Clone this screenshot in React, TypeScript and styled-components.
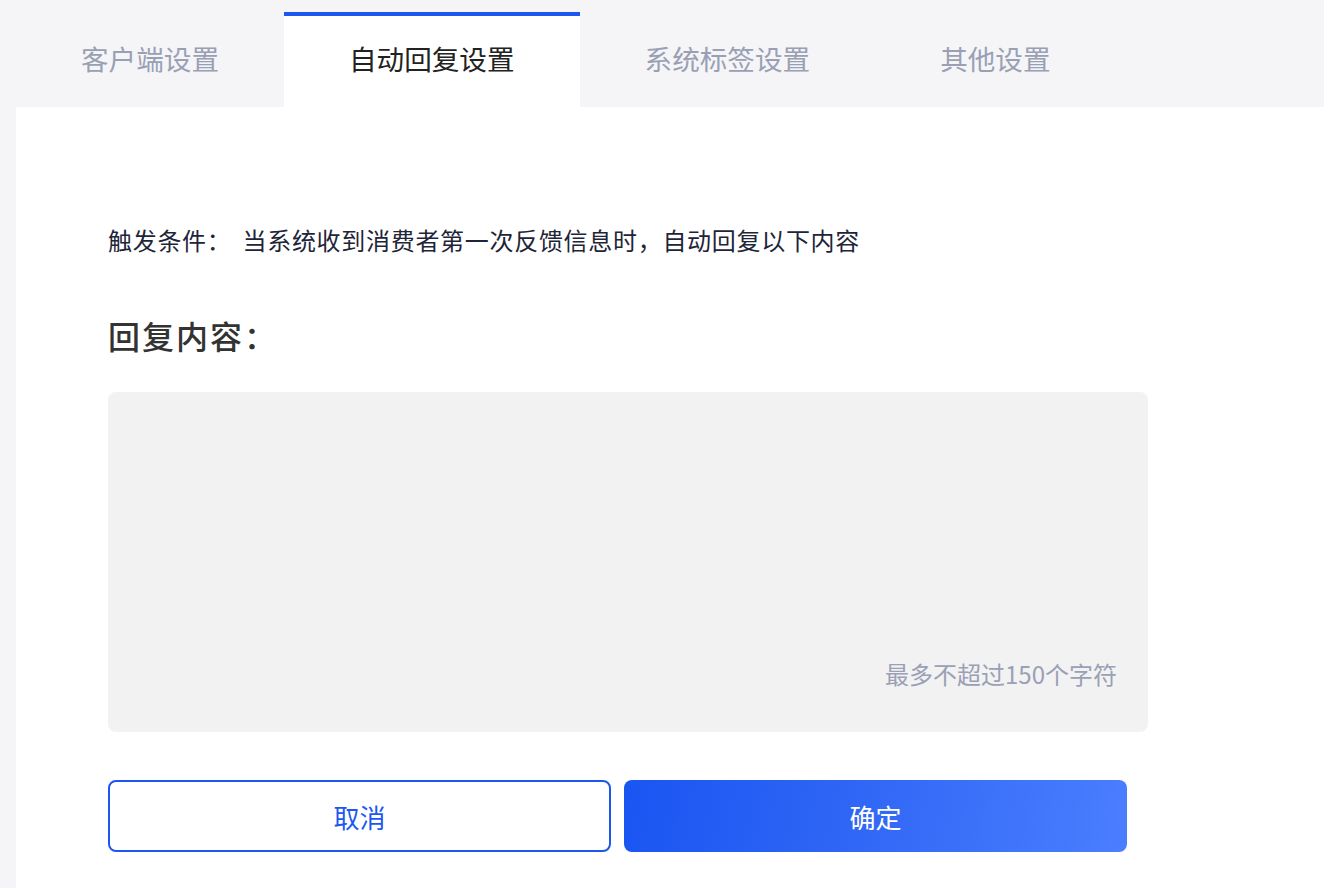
import React, { useState } from 'react';
import styled, { createGlobalStyle } from 'styled-components';

const GlobalStyle = createGlobalStyle`
    html, body {
        margin: 0;
        padding: 0;
        background: #f5f5f8;
        font-family: "Noto Sans CJK SC", "Noto Sans", sans-serif;
    }
    * {
        box-sizing: border-box;
    }
`;

const tabs = ['客户端设置', '自动回复设置', '系统标签设置', '其他设置'];

export default function App() {
    const [active, setActive] = useState<number>(1);
    const [text, setText] = useState<string>('');

    return (<Page>
        <GlobalStyle />
        <TabBar>
            { tabs.map((t, i) => <Tab key={t} active={(i === active).toString()} onClick={() => setActive(i)}>{ t }</Tab>) }
        </TabBar>
        <Panel>
            <Condition>
                <ConditionLabel>触发条件：</ConditionLabel>
                <span>当系统收到消费者第一次反馈信息时，自动回复以下内容</span>
            </Condition>
            <Heading>回复内容：</Heading>
            <Editor>
                <TextInput value={text} maxLength={150} onChange={(e) => setText(e.target.value)} />
                <Counter>最多不超过150个字符</Counter>
            </Editor>
            <Buttons>
                <Button kind="ghost">取消</Button>
                <Button kind="primary">确定</Button>
            </Buttons>
        </Panel>
    </Page>);
}

const Page = styled.div`
    min-height: 888px;
    display: flex;
    flex-direction: column;
    padding-left: 16px;
`;

const TabBar = styled.div`
    display: flex;
    flex-direction: row;
    height: 107px;
    padding-top: 12px;
`;

const Tab = styled.div<{ active: string }>`
    padding: 0 65px 8px;
    height: 95px;
    display: flex;
    align-items: center;
    justify-content: center;
    font-size: 27.6px;
    cursor: pointer;
    color: ${props => props.active === 'true' ? '#222222' : '#9aa0b4'};
    background-color: ${props => props.active === 'true' ? '#ffffff' : 'transparent'};
    border-top: 4px solid ${props => props.active === 'true' ? '#1c58f0' : 'transparent'};
`;

const Panel = styled.div`
    flex: 1;
    background: #ffffff;
    padding: 116px 0 36px 92px;
`;

const Condition = styled.div`
    display: flex;
    flex-direction: row;
    font-size: 24px;
    letter-spacing: 0.7px;
    line-height: 34px;
    color: #1e2538;
`;

const ConditionLabel = styled.span`
    margin-right: 11px;
`;

const Heading = styled.div`
    margin-top: 56px;
    font-size: 32px;
    letter-spacing: 2px;
    line-height: 44px;
    font-weight: 500;
    color: #333333;
`;

const Editor = styled.div`
    margin-top: 35px;
    width: 1040px;
    height: 340px;
    background: #f2f2f2;
    border-radius: 8px;
    display: flex;
    flex-direction: column;
    padding: 24px 31px 41px 30px;
`;

const TextInput = styled.textarea`
    flex: 1;
    border: none;
    outline: none;
    resize: none;
    background: transparent;
    font-family: inherit;
    font-size: 24px;
    color: #1e2538;
`;

const Counter = styled.div`
    align-self: flex-end;
    font-size: 24px;
    line-height: 34px;
    color: #9aa0b5;
`;

const Buttons = styled.div`
    margin-top: 48px;
    display: flex;
    flex-direction: row;
    gap: 13px;
`;

const Button = styled.button<{ kind: 'ghost' | 'primary' }>`
    width: 503px;
    height: 72px;
    border-radius: 8px;
    font-family: inherit;
    font-size: 26px;
    cursor: pointer;
    border: ${props => props.kind === 'ghost' ? '2px solid #1c58f0' : 'none'};
    color: ${props => props.kind === 'ghost' ? '#1c58f0' : '#ffffff'};
    background: ${props => props.kind === 'ghost' ? '#ffffff' : 'linear-gradient(100deg, #1a55f2 0%, #2f66f5 45%, #4b7eff 100%)'};
`;
